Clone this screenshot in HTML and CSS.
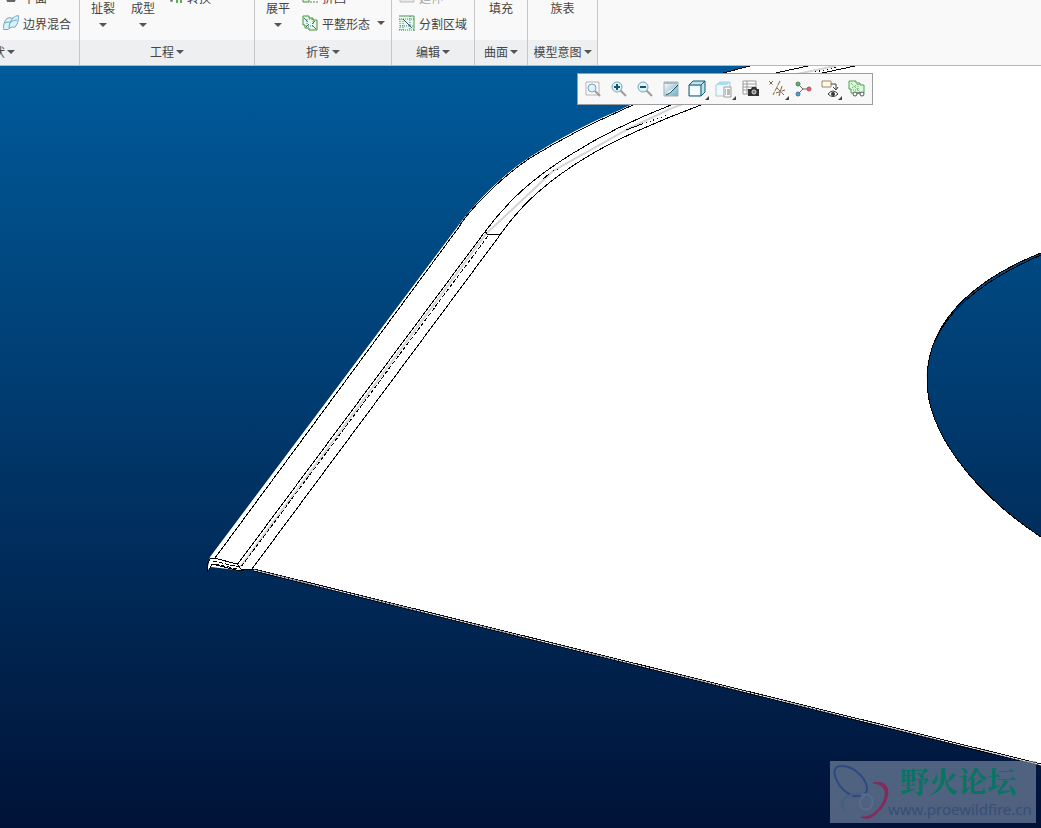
FILE: index.html
```html
<!DOCTYPE html>
<html lang="zh-CN">
  <head>
    <meta charset="utf-8">
    <title>钣金件</title>
    <link rel="stylesheet" href="styles.css">
  </head>
  <body>
    <div class="ribbon">
      <section class="group group-shape">
        <div class="group-body">
          <div class="stack">
            <button class="cmd">
              <svg class="icon" viewBox="0 0 16 16"><path d="M4 3h8v9H4z" fill="#d8d8d0" stroke="#777"/><path d="M4 12h8" stroke="#666" stroke-width="2"/></svg>
              平面
            </button>
            <button class="cmd">
              <svg class="icon" viewBox="0 0 16 16"><path d="M0 14C1 8 2 4 5 3c3-1 3 1 5 0s3-3 6-2c-1 5-1 8-4 11-2 1-3-1-5 1s-4 2-7 1z" fill="#d9f1f9" stroke="#6ba6bd"/><path d="M6 13C6 9 8 5 10 3M2 8c3-2 4 0 6-1s3-2 6-2" fill="none" stroke="#6ba6bd"/></svg>
              边界混合
            </button>
          </div>
        </div>
        <button class="group-label">形状<i class="caret"></i></button>
      </section>

      <section class="group group-engineering">
        <div class="group-body">
          <button class="big">扯裂<i class="caret"></i></button>
          <button class="big">成型<i class="caret"></i></button>
          <div class="stack convert">
            <button class="cmd">
              <svg class="icon" viewBox="0 0 16 16"><path d="M1 9l4 3V8M3 12h3" fill="none" stroke="#666"/><path d="M10 4v10M14 4v10" stroke="#5fae57" stroke-width="2"/></svg>
              转换
            </button>
            <span class="cmd"></span>
          </div>
        </div>
        <button class="group-label">工程<i class="caret"></i></button>
      </section>

      <section class="group group-bends">
        <div class="group-body">
          <button class="big">展平<i class="caret"></i></button>
          <div class="stack">
            <button class="cmd">
              <svg class="icon" viewBox="0 0 16 16"><path d="M1 5h6v8H1z" fill="#dff2dc" stroke="#4f8f4b"/><path d="M8 13h8" stroke="#4f8f4b" stroke-dasharray="2 1"/></svg>
              折回
            </button>
            <button class="cmd">
              <svg class="icon" viewBox="0 0 16 16"><path d="M1 1h6v2h4v2h4v10H7v-2H3v-3H1z" fill="#e8f8e5" stroke="#43943f"/><path d="M5 4v7h7M7 4h4v6" fill="none" stroke="#527e8b" stroke-dasharray="1 1"/><path d="M2 3l4 4M14 14l-4-4M13 6l-3 3M4 12l3-3" stroke="#3f7a8c"/></svg>
              平整形态<i class="caret"></i>
            </button>
          </div>
        </div>
        <button class="group-label">折弯<i class="caret"></i></button>
      </section>

      <section class="group group-edit">
        <div class="group-body">
          <div class="stack">
            <button class="cmd" disabled>
              <svg class="icon" viewBox="0 0 16 16"><path d="M1 5h14v8H1z" fill="#e8e8e8" stroke="#bbb"/></svg>
              延伸
            </button>
            <button class="cmd">
              <svg class="icon" viewBox="0 0 16 16"><path d="M0 0h16v16H0z" fill="#e9f7ec"/><path d="M0 1h15v15" fill="none" stroke="#4f9a55"/><path d="M0 4h15M0 15h15M1 4v12M4 4v12M11 1v14M1 11h14" fill="none" stroke="#4e7f86" stroke-dasharray="1 1"/><path d="M4 4l9 9" stroke="#245a6c"/></svg>
              分割区域
            </button>
          </div>
        </div>
        <button class="group-label">编辑<i class="caret"></i></button>
      </section>

      <section class="group group-surface">
        <div class="group-body"><button class="big">填充</button></div>
        <button class="group-label">曲面<i class="caret"></i></button>
      </section>

      <section class="group group-intent">
        <div class="group-body"><button class="big">族表</button></div>
        <button class="group-label">模型意图<i class="caret"></i></button>
      </section>
    </div>

    <main class="viewport">
      <svg class="model" viewBox="0 66 1041 762" preserveAspectRatio="xMinYMin slice">
        <!-- sheet body -->
        <path class="sheet" fill-rule="evenodd" d="M750 66C690 81 655 93 620 110C590 122 560 138 530 157C505 173 478 199 458 226L210 557L207 571L211 567L237 570L254 569L1041 765V66ZM1041 253C985 275 927 315 927 380C927 430 970 490 1041 537Z"/>
        <!-- outer edges -->
        <path class="edge" d="M750 66C690 81 655 94 620 111C590 124 560 140 530 158C505 175 478 200 459 226"/>
        <path class="edge" d="M462 223L215 558"/>
        <!-- hole -->
        <path class="edge" d="M1041 253C985 275 927 315 927 380C927 430 970 490 1041 537"/>
        <path class="edge" d="M1041 255C990 277 950 305 934 343"/>
        <!-- bend -->
        <path class="shade" d="M835 66C760 81 700 98 672 108L630 128L553 171L486 234L240 567"/>
        <path class="edge" d="M808 66C750 78 700 92 671 105C640 117 600 136 570 155C535 177 510 198 484 233L237 565"/>
        <path class="edge" d="M855 66C790 79 740 93 701 105C660 120 615 140 590 155C550 179 523 202 500 235L252 569"/>
        <path class="edge dashed" d="M488 236L241 567"/>
        <path class="edge" d="M485 231L487 234H500M626 130L642 124M543 179L549 174"/>
        <path class="edge dotted" d="M642 124L668 115M553 171L560 168M815 72L838 67"/>
        <!-- corner and bottom thickness -->
        <path class="edge" d="M207 572V565L210 559L214 558L237 564L241 569L254 569"/>
        <path class="edge" d="M209 570L212 564L236 570L244 570"/>
        <path class="edge dashed" d="M213 561L239 567M215 564L238 569"/>
        <path class="edge" d="M254 569L1041 764M254 571L1041 766"/>
        <path class="thickness" d="M254 570L1041 765"/>
      </svg>

      <div class="view-toolbar" role="toolbar" aria-label="视图">
        <button class="tool" aria-label="重新调整">
          <svg class="icon" viewBox="0 0 18 18"><path d="M2 2h13v13H2z" fill="#fafafa" stroke="#b5b5b5"/><path d="M11 11l5 5" stroke="#a8998f" stroke-width="2"/><circle cx="8" cy="8" r="4" fill="#e0f3fb" stroke="#75a5b8"/></svg>
        </button>
        <button class="tool" aria-label="放大">
          <svg class="icon" viewBox="0 0 18 18"><path d="M10 10l6 6" stroke="#a8998f" stroke-width="2"/><circle cx="7" cy="7" r="5" fill="#e0f3fb" stroke="#75a5b8"/><path d="M4 7h6M7 4v6" stroke="#17566e" stroke-width="2"/></svg>
        </button>
        <button class="tool" aria-label="缩小">
          <svg class="icon" viewBox="0 0 18 18"><path d="M10 10l6 6" stroke="#a8998f" stroke-width="2"/><circle cx="7" cy="7" r="5" fill="#e0f3fb" stroke="#75a5b8"/><path d="M4 7h6" stroke="#17566e" stroke-width="2"/></svg>
        </button>
        <button class="tool" aria-label="重画">
          <svg class="icon" viewBox="0 0 18 18"><defs><linearGradient id="repaint" x2="1" y2="1"><stop stop-color="#fff"/><stop offset="1" stop-color="#6fabbd"/></linearGradient></defs><path d="M2 2h14v14H2z" fill="url(#repaint)" stroke="#9db2b8"/><path d="M2 2h14v2H2z" fill="#a3bcc4"/><path d="M15 6l-7 7-4 2 2-3z" fill="#fff"/><path d="M16 5l-8 8-4 2" fill="none" stroke="#174f60"/></svg>
        </button>
        <button class="tool more" aria-label="显示样式">
          <svg class="icon" viewBox="0 0 18 18"><path d="M1 5l4-4h12v11l-4 4H1z" fill="#b9e4f2" stroke="#175b72"/><path d="M2 6h10v9H2z" fill="#f4fcff"/><path d="M1 5h12v11M13 5l4-4" fill="none" stroke="#175b72"/></svg>
        </button>
        <button class="tool more" aria-label="已保存方向">
          <svg class="icon" viewBox="0 0 18 18"><path d="M1 5l4-3h10v11l-3 3H1z" fill="#eefaff" stroke="#a9cbd6"/><path d="M1 5h11l3-3H5z" fill="#a6dcf0"/><path d="M9 7h7v10H9z" fill="#fff" stroke="#999"/><path d="M10 10h1M12 10h3M10 12h1M12 12h3M10 14h1M12 14h3" stroke="#806f58"/></svg>
        </button>
        <button class="tool" aria-label="视图管理器">
          <svg class="icon" viewBox="0 0 18 18"><path d="M1 1h13v13H1z" fill="#fff" stroke="#999"/><path d="M1 4h13M1 7h13M1 10h6M5 1v13" stroke="#999"/><path d="M6 9h3l1-2h4l1 2h2v7H6z" fill="#333"/><circle cx="12" cy="12" r="2" fill="#777" stroke="#ddd"/></svg>
        </button>
        <button class="tool more" aria-label="基准显示过滤器">
          <svg class="icon" viewBox="0 0 18 18"><path d="M1 1l4 4M5 1L1 5M12 1L5 15M8 13l9-3M9 8l7 7M14 6l-3 10" fill="none" stroke="#806737" stroke-dasharray="5 1"/></svg>
        </button>
        <button class="tool" aria-label="旋转中心">
          <svg class="icon" viewBox="0 0 18 18"><path d="M3 4l5 5h7M8 9l-5 5" fill="none" stroke="#666"/><circle cx="3" cy="4" r="2" fill="#67ad7c" stroke="#438a58"/><circle cx="14" cy="9" r="2" fill="#e4616b" stroke="#bd4b52"/><circle cx="3" cy="14" r="2" fill="#579bc0" stroke="#397795"/></svg>
        </button>
        <button class="tool more" aria-label="注释显示">
          <svg class="icon" viewBox="0 0 18 18"><path d="M1 1h9v6H1z" fill="#fff8e8" stroke="#9b8a69"/><path d="M10 4h5v5M12 7l3 3 2-3" fill="none" stroke="#444"/><path d="M7 14q5-6 10 0q-5 5-10 0z" fill="#fff" stroke="#333"/><circle cx="12" cy="14" r="2" fill="#333"/></svg>
        </button>
        <button class="tool" aria-label="平整形态预览">
          <svg class="icon" viewBox="0 0 18 18"><path d="M1 1h7v2h4v2h4v8H3V9H1z" fill="#dff7dc" stroke="#4ba54c"/><path d="M3 3l9 9M4 8l6-4M10 4v6H4" fill="none" stroke="#4ba54c" stroke-dasharray="1 1"/><circle cx="7" cy="14" r="2" fill="#fff" stroke="#555"/><circle cx="14" cy="14" r="2" fill="#fff" stroke="#555"/><path d="M9 13h3" stroke="#555"/></svg>
        </button>
      </div>

      <div class="watermark">
        <svg class="watermark-logo" viewBox="0 0 60 60"><g fill="none"><path d="M32 34C25 38 14 32 8 22C2 11 4 4 13 5C26 6 37 19 37 28C37 31 35 33 32 34" stroke="#2b4b80" stroke-width="2"/><path d="M15 50C8 42 14 34 26 33C33 32 38 34 42 38" stroke="#426083" stroke-width="2"/><path d="M31 34C40 31 44 38 42 44C39 51 31 49 30 43C29 39 32 36 35 35" stroke="#536d8b" stroke-width="2"/><path d="M43 22C60 18 61 34 53 45C46 55 38 60 31 56C40 57 47 51 52 43C58 33 56 23 43 22z" fill="#842a5d" stroke="#842a5d"/></g></svg>
        <div class="watermark-text">
          <strong class="watermark-name">野火论坛</strong>
          <span class="watermark-url">www.proewildfire.cn</span>
        </div>
      </div>
    </main>
  </body>
</html>
```
FILE: styles.css
```css
* {
  box-sizing: border-box;
}

body {
  margin: 0;
  height: 100vh;
  display: flex;
  flex-direction: column;
  overflow: hidden;
  font-family: "Liberation Sans", "Noto Sans CJK SC", sans-serif;
  font-size: 12px;
  color: #444;
}

button {
  margin: 0;
  padding: 0;
  border: none;
  background: none;
  font: inherit;
  color: inherit;
  white-space: nowrap;
}

.icon {
  width: 16px;
  height: 16px;
  flex: none;
}

.caret {
  border: 4px solid transparent;
  border-top-color: #555;
  border-bottom: none;
}

/* ribbon, scrolled so the first group starts off screen */
.ribbon {
  display: flex;
  flex: none;
  margin-left: -83px;
  background: #f9f9f9;
  border-bottom: 1px solid #b5b8bb;
}

.group {
  display: flex;
  flex-direction: column;
  flex: none;
  border-right: 1px solid #c4c6c8;
}

.group-shape { width: 163px; }
.group-engineering { width: 175px; }
.group-bends { width: 137px; }
.group-edit { width: 83px; }
.group-surface { width: 53px; }
.group-intent { width: 70px; }

.group-body {
  height: 40px;
  display: flex;
  align-items: flex-end;
  overflow: hidden;
}

.group-surface .group-body,
.group-intent .group-body {
  justify-content: center;
}

.group-shape .group-body {
  justify-content: flex-end;
  padding-right: 8px;
}

.group-bends .group-body,
.group-edit .group-body {
  padding-left: 7px;
}

.group-label {
  height: 25px;
  padding-bottom: 2px;
  display: flex;
  align-items: center;
  justify-content: center;
  gap: 2px;
  background: #eeeff0;
}

.group-body .big {
  width: 40px;
  height: 40px;
  display: flex;
  flex-direction: column;
  align-items: center;
  gap: 5px;
  line-height: 18px;
}

.group-engineering .group-body {
  padding-left: 3px;
}

.group-bends .big {
  width: 32px;
  margin-right: 8px;
}

.stack {
  display: flex;
  flex-direction: column;
  padding-bottom: 4px;
}

.convert {
  margin-left: 4px;
}

.cmd {
  height: 26px;
  display: flex;
  align-items: center;
  gap: 4px;
}

.cmd .caret {
  margin-left: 3px;
}

.cmd:disabled {
  color: #aaa;
}

/* graphics window */
.viewport {
  flex: 1;
  min-height: 0;
  position: relative;
  background: linear-gradient(#005b9b, #001237);
}

.model {
  display: block;
  width: 100%;
  height: 100%;
}

.sheet {
  fill: #fff;
}

.edge {
  fill: none;
  stroke: #000;
  shape-rendering: crispEdges;
}

.dashed {
  stroke-dasharray: 4 2;
}

.dotted {
  stroke-dasharray: 1 3;
}

.shade {
  fill: none;
  stroke: #d4d4d4;
  stroke-width: 2;
}

.thickness {
  stroke: #fff;
  stroke-dasharray: 3 1;
}

.view-toolbar {
  position: absolute;
  top: 7px;
  left: 577px;
  display: flex;
  padding: 2px;
  background: #f8f8f8;
  border: 1px solid #9b9da0;
}

.tool {
  width: 26px;
  height: 26px;
  padding: 3px 4px;
  position: relative;
}

.tool .icon {
  display: block;
  width: 18px;
  height: 18px;
}

.tool.more {
  width: 27px;
}

.more::after {
  content: "";
  position: absolute;
  right: 2px;
  bottom: 2px;
  border: 2px solid #444;
  border-top-color: transparent;
  border-left-color: transparent;
}

.watermark {
  position: absolute;
  right: 5px;
  bottom: 5px;
  width: 206px;
  height: 62px;
  display: flex;
  background: rgba(127, 145, 170, 0.62);
}

.watermark-logo {
  width: 60px;
  height: 60px;
  flex: none;
}

.watermark-text {
  display: flex;
  flex-direction: column;
  margin-left: -2px;
}

.watermark-name {
  padding-left: 12px;
  font-family: "Noto Serif CJK SC", "Noto Sans CJK SC", sans-serif;
  font-size: 29px;
  font-weight: 700;
  line-height: 40px;
  color: #087463;
}

.watermark-url {
  font-family: "Noto Sans", sans-serif;
  font-size: 15px;
  line-height: 16px;
  color: #364f78;
}
```
